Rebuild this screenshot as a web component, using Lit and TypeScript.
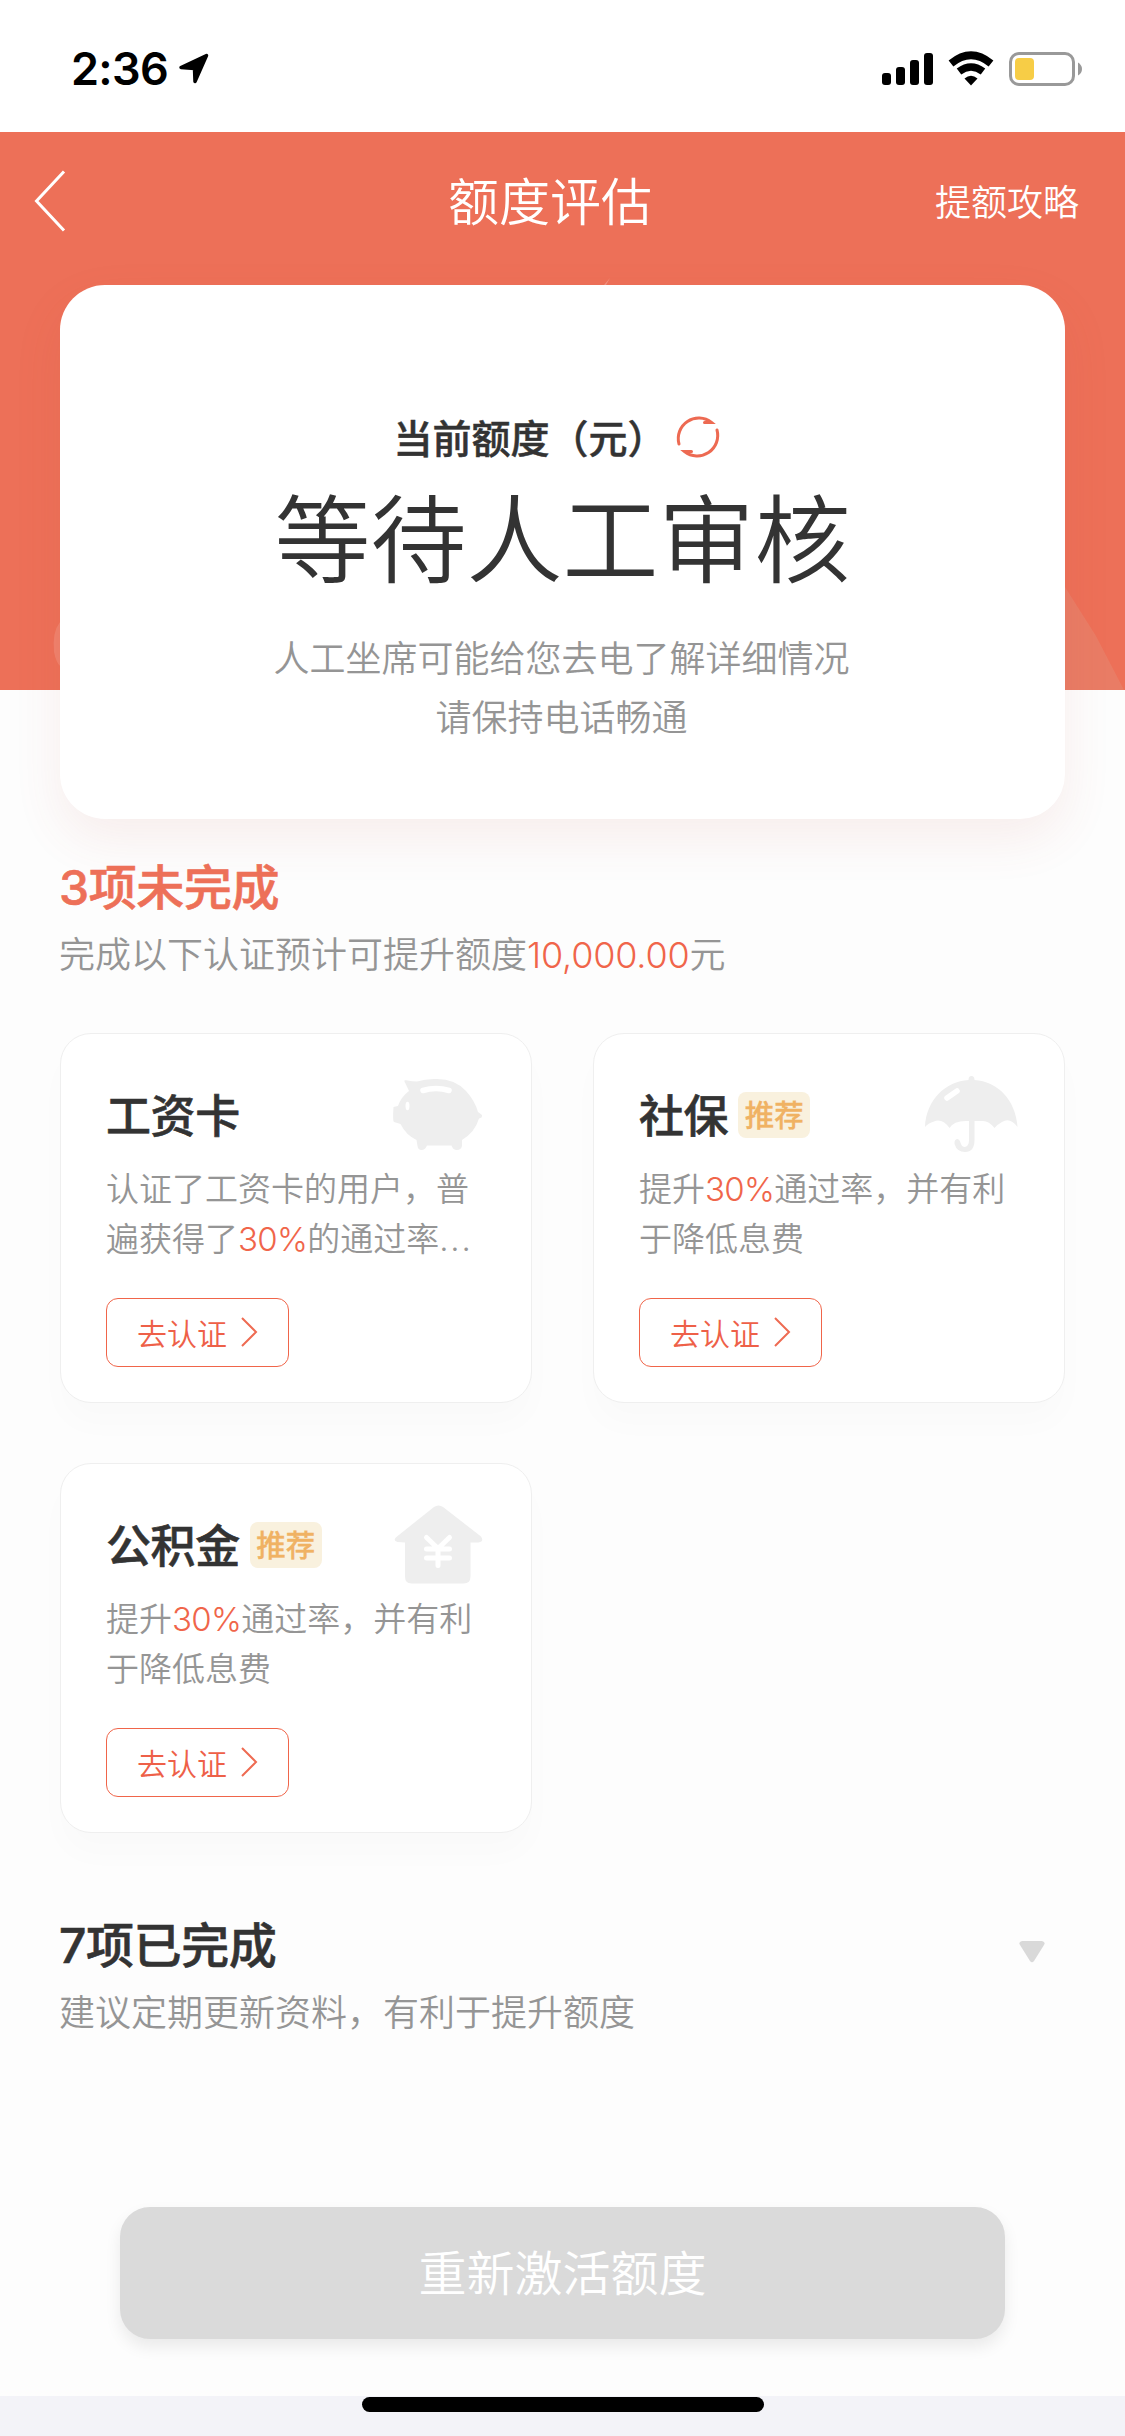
import { LitElement, html, css, svg, TemplateResult, SVGTemplateResult } from "lit";
import { customElement, property } from "lit/decorators.js";

type IconName = "pig" | "umbrella" | "house";

const icons: Record<IconName, SVGTemplateResult> = {
  pig: svg`
    <path fill="#eeeeee" d="M11.500 2.500Q10.500 1 13 1.200Q20 2.500 24 2.500Q33 -.5 44 0Q62 0 73 12Q82 22 85 33L89 36Q89.500 39 86 39.500Q82 53 69 61L69 67Q68 71 64 71Q60 71 58.500 66.500L34 66.500Q32 71 28.500 71Q25 71 24.500 67L23.500 61Q13 56 7.500 45L1 43Q-.5 42 .5 28L5 27Q8 18 16 12Z"/>
    <path d="M30 11.500Q43 7.500 56 11.500" fill="none" stroke="#fff" stroke-width="5.500" stroke-linecap="round"/>
    <ellipse cx="14.500" cy="27" rx="2" ry="4.200" fill="#fff"/>`,
  umbrella: svg`
    <g transform="translate(-1 -3)">
      <path fill="#eeeeee" d="M0 51C1 24 21 5 43.500 4Q43.500 0 46.500 0Q49.500 0 49.500 4C72 5 91 24 92.500 51Q85 41 77 46Q73 48 69.500 52Q64 45 58 45L49.500 45V64Q49.500 76 40 76Q32 76 29.500 68Q29 63 33 63Q35 64 36 68Q37 71 40 71Q44 70 44 64V45Q29 44 24.500 52Q17 42 9 45.500Q3 47 0 51Z"/>
      <path d="M22 22L32 15" stroke="#fff" stroke-width="5.500" stroke-linecap="round"/>
    </g>`,
  house: svg`
    <g transform="translate(1.500 -3.500)">
      <path fill="#eeeeee" d="M39.500 1.500Q44 -1.500 48.500 1.500L86.500 31Q90 36.500 84 37L76 37V71Q76 78 69 78H17Q10.500 78 10.500 71V37L3 36.500Q-2.500 35 2.500 31Z"/>
      <path d="M32 32L43.500 43L55 32M32 43.500H55M32 52.500H55M43.500 43V60" fill="none" stroke="#fff" stroke-width="5" stroke-linecap="round" stroke-linejoin="round"/>
    </g>`,
};

@customElement("auth-card")
class AuthCard extends LitElement {
  @property() name = "";
  @property({ type: Boolean }) recommended = false;
  @property() icon: IconName = "pig";
  @property({ attribute: false }) description: TemplateResult = html``;

  static styles = css`
    :host {
      display: block;
      box-sizing: border-box;
      height: 370px;
      padding: 45px 45px 0;
      background: #fff;
      border: 1px solid #efefef;
      border-radius: 31px;
      box-shadow: 0 22px 32px rgba(0, 0, 0, 0.014);
    }
    .head {
      display: flex;
      align-items: flex-start;
      height: 79px;
    }
    .name {
      font-size: 45px;
      line-height: 76px;
      letter-spacing: -0.4px;
      font-weight: 500;
      -webkit-text-stroke: 0.6px;
      color: #333;
    }
    .badge {
      margin: 13px 0 0 10px;
      width: 72px;
      height: 46px;
      border-radius: 8px;
      background: #f9f1de;
      color: #f0b263;
      font-size: 29.500px;
      line-height: 46px;
      font-weight: 500;
      -webkit-text-stroke: 0.3px;
      text-align: center;
    }
    .icon {
      width: 90px;
      height: 79px;
      margin: 0 3px 0 auto;
      overflow: visible;
    }
    .desc {
      margin-top: 6px;
      width: 372px;
      height: 100px;
      font-size: 33px;
      line-height: 50px;
      font-weight: 350;
      white-space: nowrap;
      color: #959595;
    }
    .rate {
      letter-spacing: -0.7px;
      color: #f0654a;
    }
    .dots {
      letter-spacing: 1.800px;
    }
    .go {
      display: flex;
      align-items: center;
      box-sizing: border-box;
      width: 183px;
      height: 69px;
      margin-top: 34px;
      padding: 0 0 2px 30px;
      border: 1px solid #f0654a;
      border-radius: 12px;
      font-size: 30px;
      font-weight: 350;
      color: #ee6048;
    }
    .chevron {
      width: 18px;
      height: 30px;
      margin-left: 13px;
    }
  `;

  render() {
    return html`
      <div class="head">
        <span class="name">${this.name}</span>
        ${this.recommended ? html`<span class="badge">推荐</span>` : ""}
        <svg class="icon" viewBox="0 0 90 79">${icons[this.icon]}</svg>
      </div>
      <div class="desc">${this.description}</div>
      <div class="go">
        去认证
        <svg class="chevron" viewBox="0 0 18 30" fill="none" stroke="#ee6b52" stroke-width="2">
          <path d="M2 1L16 15L2 29" />
        </svg>
      </div>
    `;
  }
}

const salary = html`认证了工资卡的用户，普<br />遍获得了<span class="rate">30%</span>的通过率<span class="dots">...</span>`;
const boost = html`提升<span class="rate">30%</span>通过率，并有利<br />于降低息费`;

@customElement("app-root")
class AppRoot extends LitElement {
  static styles = css`
    :host {
      display: flex;
      flex-direction: column;
      width: 1125px;
      height: 2436px;
      overflow: hidden;
      background: #fdfdfd;
      color: #333;
      font-family: Inter, "Noto Sans CJK SC", sans-serif;
    }
    .status {
      display: flex;
      flex: none;
      box-sizing: border-box;
      height: 132px;
      padding: 0 43px 0 71px;
      background: #fff;
    }
    .time {
      width: 98px;
      margin-top: 41px;
      font-size: 45px;
      line-height: 56px;
      letter-spacing: -0.7px;
      font-weight: 600;
      color: #000;
    }
    .location {
      width: 32px;
      height: 32px;
      margin: 53px 0 0 9px;
    }
    .indicators {
      width: 200px;
      height: 36px;
      margin: 51px 0 0 auto;
    }
    .hero {
      display: grid;
      flex: none;
      height: 558px;
      background: #ed7058;
    }
    .scenery {
      grid-area: 1 / 1;
      width: 1125px;
      height: 558px;
    }
    .hero-content {
      grid-area: 1 / 1;
    }
    .nav {
      display: grid;
      grid-template-columns: 222px 656px 1fr;
      align-items: center;
      height: 138px;
      padding-right: 46px;
      color: #fff;
    }
    .back {
      width: 32px;
      height: 62px;
      margin-left: 34px;
    }
    .title {
      margin-bottom: 4px;
      font-size: 51px;
      font-weight: 350;
      text-align: center;
    }
    .guide {
      margin-bottom: 3px;
      font-size: 36px;
      font-weight: 350;
      text-align: right;
    }
    .limit {
      display: flex;
      flex-direction: column;
      align-items: center;
      box-sizing: border-box;
      height: 534px;
      margin: 15px 60px 0;
      padding-top: 121px;
      background: #fff;
      border-radius: 45px;
      box-shadow: 0 20px 50px rgba(190, 80, 70, 0.09);
    }
    .label {
      display: flex;
      align-items: center;
      height: 60px;
      margin-right: 11px;
      font-size: 39px;
      font-weight: 500;
      -webkit-text-stroke: 0.5px;
    }
    .refresh {
      width: 46px;
      height: 46px;
      margin: 2px 0 0 8px;
    }
    .state {
      height: 140px;
      margin-top: 4px;
      font-size: 96px;
      line-height: 140px;
      font-weight: 350;
    }
    .note {
      margin: 20px 2px 0 0;
      font-size: 36px;
      line-height: 59px;
      font-weight: 350;
      text-align: center;
      color: #959595;
    }
    .section {
      padding: 0 59px;
    }
    .pending {
      margin-top: 163px;
    }
    h2 {
      margin: 0;
      font-size: 48px;
      line-height: 70px;
      letter-spacing: -0.4px;
      font-weight: 500;
      -webkit-text-stroke: 0.6px;
    }
    .pending h2 {
      color: #ed7058;
    }
    .hint {
      margin: 0;
      font-size: 36px;
      line-height: 64px;
      font-weight: 350;
      color: #959595;
    }
    .digits {
      letter-spacing: -0.2px;
      color: #f0654a;
    }
    .cards {
      display: grid;
      grid-template-columns: 472px 472px;
      gap: 60px 61px;
      padding: 0 60px;
      margin-top: 46px;
    }
    .done {
      display: flex;
      justify-content: space-between;
      margin-top: 78px;
    }
    .expand {
      width: 26px;
      height: 22px;
      margin: 30px 21px 0 0;
    }
    .activate {
      display: block;
      flex: none;
      box-sizing: border-box;
      width: 885px;
      height: 132px;
      margin: 162px auto 0;
      padding: 1px 0 0;
      border: 0;
      border-radius: 30px;
      background: #dadada;
      box-shadow: 0 8px 16px rgba(0, 0, 0, 0.08);
      color: #fff;
      font: 350 48px/131px Inter, "Noto Sans CJK SC", sans-serif;
      text-align: center;
    }
    .home {
      flex: none;
      height: 40px;
      margin-top: auto;
      background: #f3f3f8;
    }
    .bar {
      width: 402px;
      height: 15px;
      margin: 1px auto 0;
      border-radius: 8px;
      background: #000;
    }
  `;

  render() {
    return html`
      <div class="status">
        <span class="time">2:36</span>
        <svg class="location" viewBox="0 0 32 32">
          <path d="M28.500 2.500L17 28.500L16.500 15.500L3 14.500Z" stroke="#000" stroke-width="3.500" stroke-linejoin="round" />
        </svg>
        <svg class="indicators" viewBox="0 0 200 36">
          <rect x="0" y="22" width="9" height="12" rx="3" />
          <rect x="14" y="16" width="9" height="18" rx="3" />
          <rect x="28" y="9" width="9" height="25" rx="3" />
          <rect x="42" y="2" width="9" height="32" rx="3" />
          <g fill="none" stroke="#000" stroke-width="7.500">
            <path d="M69 12.500Q89 -4 109 12.500" />
            <path d="M77 20.500Q89 11.500 101 20.500" />
          </g>
          <path d="M82.500 27.500Q89 22 95.500 27.500L89 34.500Z" />
          <rect x="128.500" y="2.500" width="63" height="31" rx="8.500" fill="none" stroke="#999" stroke-width="3" />
          <rect x="133" y="7" width="19" height="22" rx="4" fill="#f7cd46" />
          <path d="M196 11.500Q200 14 200 18T196 24.500Z" fill="#999" />
        </svg>
      </div>
      <div class="hero">
        <svg class="scenery" viewBox="0 0 1125 558">
          <path d="M604 153L610 146L606 153Z" fill="#fff" opacity=".25" />
          <path d="M1065 455L1096 504L1124 558H1065Z" fill="#dcb09c" opacity=".2" />
          <path d="M60 490Q52 500 54 520Q56 530 60 534Z" fill="#fff" opacity=".12" />
        </svg>
        <div class="hero-content">
          <div class="nav">
            <svg class="back" viewBox="0 0 32 62" fill="none" stroke="#fff" stroke-width="3"><path d="M30 1.500L2.500 31L30 60.500" /></svg>
            <span class="title">额度评估</span>
            <span class="guide">提额攻略</span>
          </div>
          <div class="limit">
            <div class="label">
              当前额度（元）
              <svg class="refresh" viewBox="0 0 46 46" fill="none" stroke="#ed6a52" stroke-width="3" stroke-linecap="round">
                <path d="M4 30A20.500 20.500 0 0 1 36.500 8.500H29.500" />
                <path d="M42 16A20.500 20.500 0 0 1 9.500 37.500H16.500" />
              </svg>
            </div>
            <div class="state">等待人工审核</div>
            <div class="note">人工坐席可能给您去电了解详细情况<br />请保持电话畅通</div>
          </div>
        </div>
      </div>
      <div class="section pending">
        <h2>3项未完成</h2>
        <p class="hint">完成以下认证预计可提升额度<span class="digits">10,000.00</span>元</p>
      </div>
      <div class="cards">
        <auth-card name="工资卡" icon="pig" .description=${salary}></auth-card>
        <auth-card name="社保" icon="umbrella" recommended .description=${boost}></auth-card>
        <auth-card name="公积金" icon="house" recommended .description=${boost}></auth-card>
      </div>
      <div class="section done">
        <div>
          <h2>7项已完成</h2>
          <p class="hint">建议定期更新资料，有利于提升额度</p>
        </div>
        <svg class="expand" viewBox="0 0 26 22"><path d="M3 0H23Q27 1 25 4L15 20Q13 22.500 11 20L1 4Q-1 1 3 0Z" fill="#d9d9d9" /></svg>
      </div>
      <button class="activate">重新激活额度</button>
      <div class="home"><div class="bar"></div></div>
    `;
  }
}
